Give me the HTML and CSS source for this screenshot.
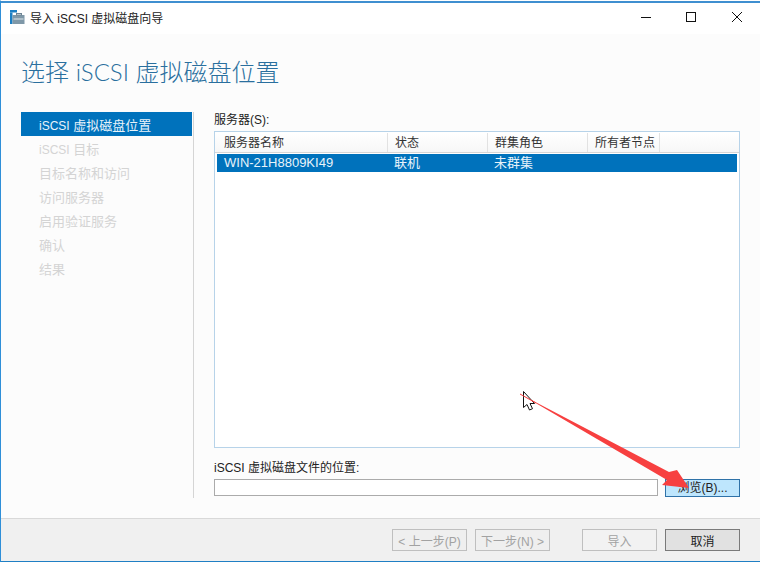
FILE: index.html
```html
<!DOCTYPE html>
<html lang="zh-CN">
<head>
  <meta charset="UTF-8" />
  <title>导入 iSCSI 虚拟磁盘向导</title>
  <link rel="stylesheet" href="styles.css">
</head>
<body>
  <div class="window">

    <!-- Title bar -->
    <div class="titlebar">
      <svg class="app-icon" width="15" height="15" viewBox="0 0 15 15">
        <rect x="0" y="0" width="7" height="2.500" fill="#1b7fc4"/>
        <rect x="0" y="2.500" width="2.500" height="11.500" fill="#1b7fc4"/>
        <rect x="2.500" y="5" width="12" height="9" fill="#7f98a8"/>
        <rect x="3.500" y="8.500" width="10" height="1" fill="#dfe7ec"/>
        <rect x="6.500" y="3.500" width="5" height="1.500" fill="none" stroke="#6d8494" stroke-width="1"/>
      </svg>
      <span class="title-text">导入 iSCSI 虚拟磁盘向导</span>
      <div class="window-controls">
        <svg width="46" height="32" viewBox="0 0 46 32"><path d="M19 15.500h10" stroke="#111" fill="none"/></svg>
        <svg width="46" height="32" viewBox="0 0 46 32"><rect x="18.500" y="10.500" width="9" height="9" stroke="#111" fill="none"/></svg>
        <svg width="46" height="32" viewBox="0 0 46 32"><path d="M18 10l10 10M28 10l-10 10" stroke="#111" fill="none"/></svg>
      </div>
    </div>

    <!-- Main -->
    <main class="content">
      <h1 class="page-title">选择 <span class="latin">iSCSI</span> 虚拟磁盘位置</h1>
      <div class="columns">
        <nav class="steps">
          <div class="step active"><span class="latin">iSCSI</span> 虚拟磁盘位置</div>
          <div class="step"><span class="latin">iSCSI</span> 目标</div>
          <div class="step">目标名称和访问</div>
          <div class="step">访问服务器</div>
          <div class="step">启用验证服务</div>
          <div class="step">确认</div>
          <div class="step">结果</div>
        </nav>
        <section class="panel">
          <div class="label">服务器(S):</div>
          <div class="listbox">
            <div class="list-head">
              <div class="col col-name">服务器名称</div>
              <div class="col col-state">状态</div>
              <div class="col col-role">群集角色</div>
              <div class="col col-owner">所有者节点</div>
            </div>
            <div class="list-row">
              <div class="cell col-name">WIN-21H8809KI49</div>
              <div class="cell col-state">联机</div>
              <div class="cell col-role">未群集</div>
            </div>
          </div>
          <div class="label path-label">iSCSI 虚拟磁盘文件的位置:</div>
          <div class="path-row">
            <div class="path-input"></div>
            <button class="btn btn-browse">浏览(B)...</button>
          </div>
        </section>
      </div>
    </main>

    <!-- Footer -->
    <footer class="footer">
      <button class="btn disabled">&lt; 上一步(P)</button>
      <button class="btn disabled">下一步(N) &gt;</button>
      <button class="btn disabled btn-import">导入</button>
      <button class="btn btn-cancel">取消</button>
    </footer>

    <!-- Annotation drawn over the screenshot -->
    <svg class="annotation" width="760" height="562" viewBox="0 0 760 562">
      <path d="M521 394.500 L669 472 L677 470 L689 488 L662 485 L667 480 Z" fill="#f74040"/>
      <path d="M523.500 391.500v16l3.500-3 2.500 5.500 3-1.300-2.500-5.200h4.500z" fill="#fff" fill-opacity="0.6" stroke="#111" stroke-width="1"/>
      <path d="M520 394 L536 403" stroke="#f74040" stroke-width="1" fill="none"/>
    </svg>
  </div>
</body>
</html>
```

FILE: styles.css
```css
* {
  box-sizing: border-box;
}

body {
  margin: 0;
  font-family: "Liberation Sans", "Noto Sans CJK SC", sans-serif;
  font-size: 12px;
  color: #1a1a1a;
  background: #fff;
}

.window {
  position: relative;
  width: 760px;
  height: 562px;
  display: flex;
  flex-direction: column;
  padding-top: 2px;
  border-top: 1px solid #fff;
  border-left: 1px solid #2f8fd8;
  border-bottom: 1px solid #1f7fc4;
  overflow: hidden;
}

.window::before {
  content: "";
  height: 2px;
  margin-top: -2px;
  background: #3f8fd0;
  flex: none;
}

/* Title bar */
.titlebar {
  height: 31px;
  flex: none;
  display: flex;
  align-items: center;
  padding: 0 0 2px 9px;
  background: #fff;
}

.app-icon {
  margin-right: 5px;
}

.title-text {
  font-size: 12px;
  color: #222;
}

.window-controls {
  margin-left: auto;
  display: flex;
}

.window-controls svg {
  display: block;
}

/* Main */
.content {
  flex: 1;
  min-height: 0;
  background: #fcfcfc;
  padding: 23px 20px 0 20px;
  border-bottom: 1px solid #d9d9d9;
}

.page-title {
  height: 30px;
  margin: 0 0 25px;
  font-size: 24px;
  line-height: 30px;
  font-weight: 300;
  color: #2a6f9e;
}

.page-title .latin {
  font-family: Lato, "Liberation Sans", sans-serif;
}

.columns {
  display: flex;
  height: 386px;
}

.steps {
  width: 173px;
  border-right: 1px solid #d5d5d5;
  padding-right: 1px;
  flex: none;
}

.step {
  height: 24px;
  line-height: 28px;
  padding-left: 18px;
  font-size: 13px;
  color: #d4d4d4;
}

.step .latin {
  font-size: 12px;
}

.step.active {
  background: #0072bc;
  color: #e8f3fa;
}

.panel {
  flex: 1;
  margin-left: 20px;
  min-width: 0;
}

.label {
  height: 19px;
  line-height: 17px;
  font-size: 12px;
  color: #222;
}

.listbox {
  height: 317px;
  border: 1px solid #b7d3e9;
  background: #fff;
  padding: 1px 2px 0;
}

.list-head {
  display: flex;
  height: 20px;
  margin: 0 -2px;
  padding-left: 2px;
  background: linear-gradient(#fff, #f7f7f7);
  border-bottom: 1px solid #d6d6d6;
}

.col {
  line-height: 21px;
  font-size: 12px;
  color: #333;
  border-right: 1px solid #e2e2e2;
  padding-left: 7px;
}

.col-name { width: 171px; }
.col-state { width: 100px; }
.col-role { width: 100px; }
.col-owner { width: 72px; }

.list-row {
  display: flex;
  height: 18px;
  margin-top: 1px;
  background: #0072bc;
  color: #e8f3fa;
}

.cell {
  line-height: 18px;
  font-size: 13px;
  padding-left: 7px;
}

.cell.col-name {
  width: 170px;
}

.path-label {
  margin-top: 13px;
  height: 18px;
  line-height: 15px;
}

.path-row {
  display: flex;
  justify-content: space-between;
}

.path-input {
  width: 444px;
  height: 17px;
  border: 1px solid #ababab;
  background: #fff;
}

/* Buttons */
.btn {
  width: 75px;
  padding: 0;
  font-family: inherit;
  font-size: 12px;
  color: #222;
  border: 1px solid #acacac;
  background: #efefef;
}

.btn-browse {
  height: 18px;
  line-height: 16px;
  border-color: #2f72a8;
  background: #bee6fd;
}

.footer {
  flex: none;
  height: 42px;
  display: flex;
  align-items: flex-start;
  justify-content: flex-end;
  gap: 8px;
  padding: 10px 20px 0 0;
  background: #f0f0f0;
}

.footer .btn {
  height: 22px;
}

.btn.disabled {
  color: #a2a2a2;
  border-color: #bfbfbf;
}

.btn-import {
  margin-left: 24px;
  background: #f2f2f2;
}

.btn-cancel {
  background: #e1e1e1;
  border-color: #7a7a7a;
}

.annotation {
  position: absolute;
  top: -1px;
  left: -1px;
  pointer-events: none;
}
```
